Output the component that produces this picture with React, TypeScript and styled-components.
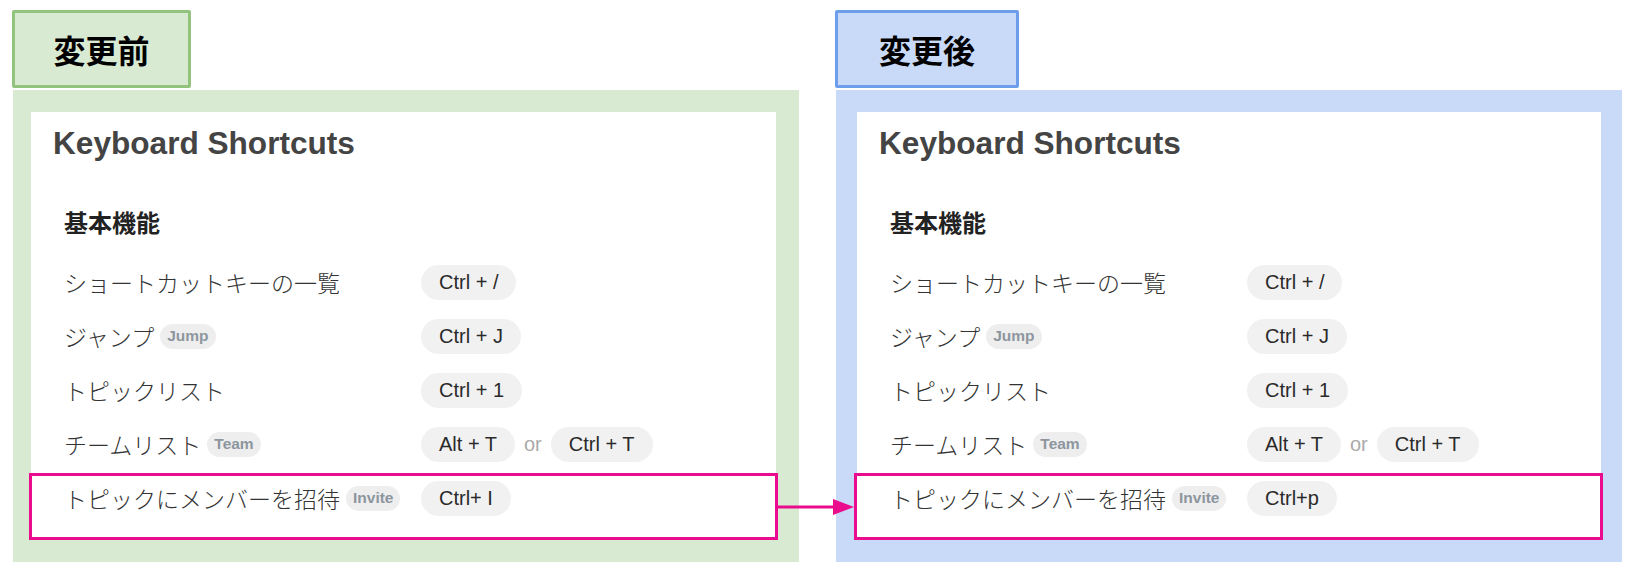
import styled, { createGlobalStyle } from 'styled-components';

const GlobalStyle = createGlobalStyle`
  body {
    margin: 0;
    background: #fff;
  }
`;

const Page = styled.div`
  position: relative;
  display: flex;
  gap: 36px;
  width: 1634px;
  height: 572px;
  box-sizing: border-box;
  padding: 10px 0 0 12px;
`;

const Section = styled.section`
  display: flex;
  flex-direction: column;
  gap: 2px;
`;

const Tag = styled.div<{ $fill: string; $border: string; $width: number }>`
  width: ${(p) => p.$width}px;
  height: 78px;
  box-sizing: border-box;
  display: flex;
  align-items: center;
  justify-content: center;
  background: ${(p) => p.$fill};
  border: 3px solid ${(p) => p.$border};
  border-radius: 2px;
  font: 700 32px 'Noto Sans CJK JP', sans-serif;
  color: #000;
`;

const Panel = styled.div<{ $fill: string; $padLeft: number; $padRight: number }>`
  width: 786px;
  margin-left: 1px;
  box-sizing: border-box;
  display: flex;
  background: ${(p) => p.$fill};
  padding: 22px ${(p) => p.$padRight}px 23px ${(p) => p.$padLeft}px;
`;

const Card = styled.div`
  flex: 1;
  display: flex;
  flex-direction: column;
  background: #fff;
  padding-top: 14px;
`;

const Title = styled.h2`
  margin: 0;
  padding-left: 22px;
  font: 700 31.6px/34px 'Liberation Sans', Arial, sans-serif;
  color: #444;
`;

const GroupHeading = styled.h3`
  margin: 47px 0 18px 33px;
  font: 700 24px/30px 'Noto Sans CJK JP', sans-serif;
  color: #222;
`;

const Row = styled.div<{ $highlight?: boolean; $shiftLeft: number }>`
  position: relative;
  display: flex;
  align-items: center;
  height: 54px;
  padding-left: 33px;
  padding-bottom: ${(p) => (p.$highlight ? 14 : 0)}px;

  ${(p) =>
    p.$highlight &&
    `
    &::after {
      content: '';
      position: absolute;
      left: -${p.$shiftLeft}px;
      right: -2px;
      top: 2px;
      bottom: -1px;
      border: 3px solid #ea0c8c;
      pointer-events: none;
    }
  `}
`;

const Label = styled.div`
  flex: 0 0 357px;
  display: flex;
  align-items: center;
  font: 300 23px 'Liberation Sans', 'Noto Sans CJK JP', sans-serif;
  color: #333;
`;

const Badge = styled.span`
  display: inline-flex;
  align-items: center;
  height: 25px;
  margin-left: 6px;
  padding: 0 7px;
  border-radius: 13px;
  background: #eeeeee;
  color: #8d969e;
  font: 700 15.5px 'Liberation Sans', Arial, sans-serif;
`;

const Keys = styled.div`
  display: flex;
  align-items: center;
  gap: 9px;
`;

const Key = styled.span`
  display: inline-flex;
  align-items: center;
  height: 35px;
  padding: 0 18px;
  border-radius: 18px;
  background: #f1f1f1;
  color: #2a2a2a;
  font: 400 20px 'Liberation Sans', Arial, sans-serif;
  white-space: pre;
`;

const Or = styled.span`
  color: #aaa;
  font: 400 20px 'Liberation Sans', Arial, sans-serif;
`;

const KeyGroup = styled.span`
  display: contents;
`;

const Connector = styled.svg`
  position: absolute;
  left: 776px;
  top: 499px;
`;

type Shortcut = { label: string; badge?: string; keys: string[] };

const baseRows: Shortcut[] = [
  { label: 'ショートカットキーの一覧', keys: ['Ctrl + /'] },
  { label: 'ジャンプ', badge: 'Jump', keys: ['Ctrl + J'] },
  { label: 'トピックリスト', keys: ['Ctrl + 1'] },
  { label: 'チームリスト', badge: 'Team', keys: ['Alt + T', 'Ctrl + T'] },
];

function ShortcutCard({ inviteKey, shiftLeft }: { inviteKey: string; shiftLeft: number }) {
  const rows: Shortcut[] = [
    ...baseRows,
    { label: 'トピックにメンバーを招待', badge: 'Invite', keys: [inviteKey] },
  ];
  return (
    <Card>
      <Title>Keyboard Shortcuts</Title>
      <GroupHeading>基本機能</GroupHeading>
      {rows.map((row, i) => (
        <Row key={row.label} $highlight={i === rows.length - 1} $shiftLeft={shiftLeft}>
          <Label>
            {row.label}
            {row.badge && <Badge>{row.badge}</Badge>}
          </Label>
          <Keys>
            {row.keys.map((k, j) => (
              <KeyGroup key={k}>
                {j > 0 && <Or>or</Or>}
                <Key>{k}</Key>
              </KeyGroup>
            ))}
          </Keys>
        </Row>
      ))}
    </Card>
  );
}

export default function App() {
  return (
    <>
      <GlobalStyle />
      <Page>
        <Section>
          <Tag $fill="#d9ead3" $border="#93c47d" $width={179}>
            変更前
          </Tag>
          <Panel $fill="#d9ead3" $padLeft={18} $padRight={23}>
            <ShortcutCard inviteKey="Ctrl+ I" shiftLeft={2} />
          </Panel>
        </Section>
        <Section>
          <Tag $fill="#c9daf8" $border="#6d9eeb" $width={184}>
            変更後
          </Tag>
          <Panel $fill="#c9daf8" $padLeft={21} $padRight={21}>
            <ShortcutCard inviteKey="Ctrl+p" shiftLeft={3} />
          </Panel>
        </Section>
        <Connector width="80" height="16" viewBox="0 0 80 16">
          <line x1="0" y1="8" x2="60" y2="8" stroke="#ea0c8c" strokeWidth="3" />
          <polygon points="57,0 78,8 57,16" fill="#ea0c8c" />
        </Connector>
      </Page>
    </>
  );
}
